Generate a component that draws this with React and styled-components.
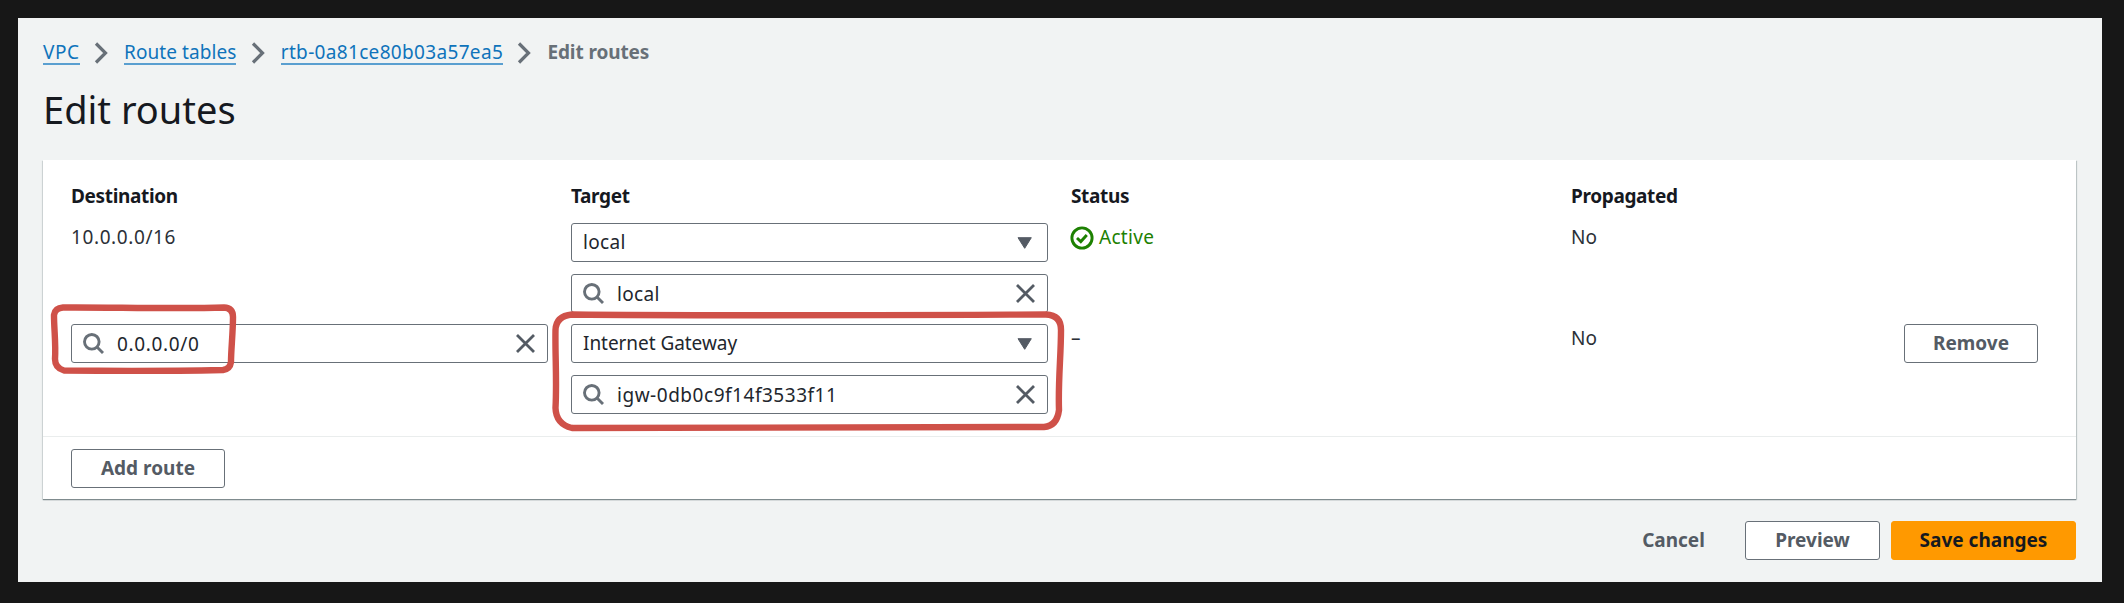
import React from "react";
import styled, { createGlobalStyle } from "styled-components";

const GlobalStyle = createGlobalStyle`
  * { box-sizing: border-box; }
  body {
    margin: 0;
    background: #171717;
    font-family: "Noto Sans", "Open Sans", sans-serif;
    font-size: 19px;
    line-height: 27px;
    color: #16191f;
  }
`;

const Frame = styled.div`
  height: 603px;
  padding: 18px 22px 21px 18px;
  background: #171717;
`;

const Page = styled.main`
  height: 564px;
  padding: 20px 26px 0 25px;
  background: #f1f3f3;
`;

const Breadcrumbs = styled.nav`
  display: flex;
  align-items: flex-start;
  height: 28px;
`;

const Crumb = styled.a`
  height: 27px;
  line-height: 28px;
  color: #0f73bb;
  border-bottom: 2px solid #5a9fd0;
  letter-spacing: ${(p) => p.$tracking || 0}px;
  white-space: nowrap;
`;

const CurrentCrumb = styled.span`
  line-height: 28px;
  font-weight: 700;
  color: #687078;
  letter-spacing: -0.1px;
`;

const CrumbArrow = styled.svg`
  width: 15px;
  height: 22px;
  margin: 4px 15px 0 14.3px;
  flex: none;
`;

const Title = styled.h1`
  margin: 18px 0 0;
  height: 76px;
  font-size: 38px;
  font-weight: 400;
  line-height: 50px;
`;

const Card = styled.section`
  height: 339px;
  background: #fff;
  box-shadow: 0 1px 1px 0 #7f8b8e, 1px 1px 1px 0 #c9d0d0, -1px 1px 1px 0 #dde1e1;
`;

const Table = styled.div`
  display: flex;
  flex-direction: column;
  height: 276px;
  padding: 21px 28px 0;
`;

const Row = styled.div`
  display: grid;
  grid-template-columns: 477px 477px 477px 310px 134px;
  column-gap: 23px;
  height: ${(p) => p.$height}px;
`;

const ColumnName = styled.div`
  line-height: 31px;
  font-weight: 700;
  letter-spacing: -0.35px;
`;

const Value = styled.div`
  display: flex;
  align-items: flex-start;
  line-height: 28px;
  letter-spacing: ${(p) => p.$tracking || 0}px;
  color: ${(p) => p.$color || "#2b3037"};
`;

const StatusIcon = styled.svg`
  width: 24px;
  height: 24px;
  margin: 3px 5px 0 -1px;
`;

const Fields = styled.div`
  display: flex;
  flex-direction: column;
  gap: 12px;
`;

const Field = styled.div`
  display: flex;
  align-items: center;
  height: 39px;
  padding: 0 12px 0 11px;
  border: 1px solid #687078;
  border-radius: 3px;
  background: #fff;
  color: #22262d;
`;

const FieldText = styled.span`
  flex: 1;
  padding-left: ${(p) => p.$indent || 0}px;
  padding-top: ${(p) => (p.$indent ? 1 : 0)}px;
  letter-spacing: ${(p) => p.$tracking || 0}px;
`;

const Glyph = styled.svg`
  flex: none;
  width: ${(p) => p.$size}px;
  height: ${(p) => p.$size}px;
`;

const Button = styled.button`
  display: flex;
  justify-content: center;
  width: ${(p) => p.$width}px;
  height: 39px;
  padding: 0;
  border: 1px solid ${(p) => (p.$primary ? "#ff9900" : p.$link ? "transparent" : "#687078")};
  border-radius: 3px;
  background: ${(p) => (p.$primary ? "#ff9900" : p.$link ? "transparent" : "#fff")};
  color: ${(p) => (p.$primary ? "#16191f" : "#545b64")};
  font: 700 19px/36px "Noto Sans", "Open Sans", sans-serif;
`;

const CardFooter = styled.div`
  height: 63px;
  padding: 12px 28px;
  border-top: 1px solid #eaeded;
`;

const Actions = styled.footer`
  display: flex;
  justify-content: flex-end;
  gap: 11px;
  padding-top: 22px;
`;

const Anchor = styled.div`
  position: relative;
`;

const Marker = styled.svg`
  position: absolute;
  left: ${(p) => p.$left}px;
  top: ${(p) => p.$top}px;
  overflow: visible;
  pointer-events: none;
`;

function Arrow() {
  return (
    <CrumbArrow viewBox="0 0 15 22" fill="none" stroke="#687078" strokeWidth="3.2">
      <path d="M2 1.5 11.500 11 2 20.5" />
    </CrumbArrow>
  );
}

function SearchField({ value, tracking }) {
  return (
    <Field>
      <Glyph $size={21} viewBox="0 0 21 21" fill="none" stroke="#687078" strokeWidth="2.9">
        <circle cx="8.8" cy="8.8" r="7.3" />
        <path d="m14 14 6 6" />
      </Glyph>
      <FieldText $indent={13} $tracking={tracking}>{value}</FieldText>
      <Glyph $size={19} viewBox="0 0 19 19" fill="none" stroke="#545b64" strokeWidth="2.8">
        <path d="m1 1 17 17M18 1 1 18" />
      </Glyph>
    </Field>
  );
}

function SelectField({ value, tracking }) {
  return (
    <Field>
      <FieldText $tracking={tracking}>{value}</FieldText>
      <Glyph $size={19} viewBox="0 0 19 19" fill="#545b64" stroke="#545b64" strokeLinejoin="round">
        <path d="M2 4.700h13.300L8.700 15.300z" />
      </Glyph>
    </Field>
  );
}

export default function App() {
  return (
    <>
      <GlobalStyle />
      <Frame>
        <Page>
          <Breadcrumbs>
            <Crumb $tracking={0.6}>VPC</Crumb>
            <Arrow />
            <Crumb $tracking={0.08}>Route tables</Crumb>
            <Arrow />
            <Crumb $tracking={0.33}>rtb-0a81ce80b03a57ea5</Crumb>
            <Arrow />
            <CurrentCrumb>Edit routes</CurrentCrumb>
          </Breadcrumbs>
          <Title>Edit routes</Title>
          <Card>
            <Table>
              <Row $height={42}>
                <ColumnName>Destination</ColumnName>
                <ColumnName>Target</ColumnName>
                <ColumnName>Status</ColumnName>
                <ColumnName>Propagated</ColumnName>
              </Row>
              <Row $height={101}>
                <Value $tracking={0.6}>10.0.0.0/16</Value>
                <Fields>
                  <SelectField value="local" tracking={0.3} />
                  <SearchField value="local" tracking={0.3} />
                </Fields>
                <Value $color="#1d8102" $tracking={0.3}>
                  <StatusIcon viewBox="0 0 24 24" fill="none" stroke="#1d8102" strokeWidth="2.9">
                    <circle cx="12" cy="12" r="10.1" />
                    <path d="m7 12 3.800 3.600 6-6.600" />
                  </StatusIcon>
                  Active
                </Value>
                <Value>No</Value>
              </Row>
              <Row $height={90}>
                <Anchor>
                  <SearchField value="0.0.0.0/0" tracking={0.65} />
                  <Marker $left={-20} $top={-20} width="185" height="70" viewBox="0 0 185 70" fill="none" stroke="#cf5149" strokeWidth="6.4" strokeLinejoin="round">
                    <path d="M12 3.500C50 3 125 5 173 3.500Q182 4 182 13C182 28 180 46 180 58Q179 65 172 66C125 67 55 67 13 66.500Q4 64 4 55C5 40 3 25 3 11Q4 4 12 3.500Z" />
                  </Marker>
                </Anchor>
                <Anchor>
                  <Fields>
                    <SelectField value="Internet Gateway" tracking={-0.05} />
                    <SearchField value="igw-0db0c9f14f3533f11" tracking={0.53} />
                  </Fields>
                  <Marker $left={-19} $top={-13} width="512" height="119" viewBox="0 0 512 119" fill="none" stroke="#cf5149" strokeWidth="6.4" strokeLinejoin="round">
                    <path d="M20 3.500C150 5 360 4 494 3.500Q509 4 509 19C509 45 506 70 507 99Q505 115 492 116C330 116 170 117 20 117Q4 113 3.500 97C5 70 3 43 3.500 19Q4 5 20 3.500Z" />
                  </Marker>
                </Anchor>
                <Value>–</Value>
                <Value>No</Value>
                <Button $width={134}>Remove</Button>
              </Row>
            </Table>
            <CardFooter>
              <Button $width={154}>Add route</Button>
            </CardFooter>
          </Card>
          <Actions>
            <Button $link $width={121}>Cancel</Button>
            <Button $width={135}>Preview</Button>
            <Button $primary $width={185}>Save changes</Button>
          </Actions>
        </Page>
      </Frame>
    </>
  );
}
